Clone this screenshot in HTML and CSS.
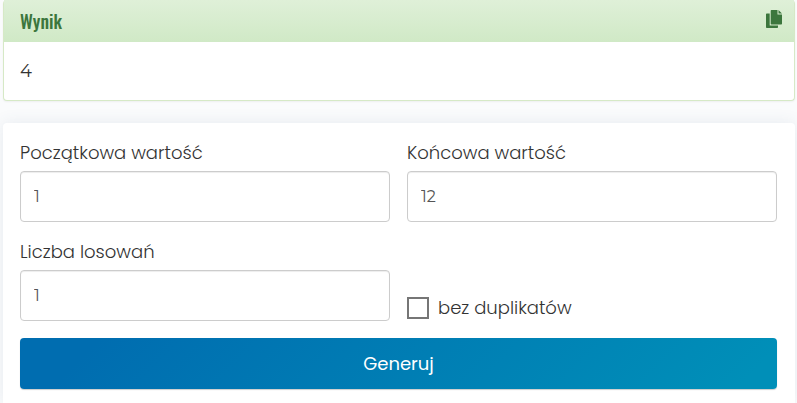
FILE: index.html
```
<!DOCTYPE html>
<html lang="pl">
<head>
    <meta charset="UTF-8">
    <meta name="viewport" content="width=device-width, initial-scale=1">
    <title>Generator liczb losowych</title>
    <link rel="stylesheet" href="styles.css">
</head>
<body>
<main class="generator">
    <section class="result">
        <div class="result__header">
            <h2 class="result__title">Wynik</h2>
            <button type="button" class="result__copy" aria-label="Kopiuj">
                <svg width="16" height="18" viewBox="0 0 16 18" aria-hidden="true">
                    <path fill="currentColor" d="M5.500 0H11.500v4.500H16v9.200a.8.800 0 0 1-.8.800H5.500a.8.800 0 0 1-.8-.8V.8a.8.800 0 0 1 .8-.8zM12.500 0L16 3.500h-3.500zM.8 3.500h2.900V15.500h8.300v1.700a.8.800 0 0 1-.8.800H.8a.8.800 0 0 1-.8-.8V4.300a.8.800 0 0 1 .8-.8z"/>
                </svg>
            </button>
        </div>
        <div class="result__body">4</div>
    </section>

    <form class="form">
        <div class="form__grid">
            <div class="field">
                <label for="valueFrom" class="field__label">Początkowa wartość</label>
                <input type="text" inputmode="numeric" id="valueFrom" class="field__input" value="1">
            </div>
            <div class="field">
                <label for="valueTo" class="field__label">Końcowa wartość</label>
                <input type="text" inputmode="numeric" id="valueTo" class="field__input" value="12">
            </div>
            <div class="field">
                <label for="drawCount" class="field__label">Liczba losowań</label>
                <input type="text" inputmode="numeric" id="drawCount" class="field__input" value="1">
            </div>
            <div class="option">
                <input type="checkbox" id="unique" class="option__box">
                <label for="unique" class="option__label">bez duplikatów</label>
            </div>
        </div>
        <button type="button" class="form__submit">Generuj</button>
    </form>
</main>
</body>
</html>
```
FILE: styles.css
```
* {
    box-sizing: border-box;
}

body {
    margin: 0;
    background-color: #fafbfc;
    color: #333;
    font-family: Poppins, Inter, sans-serif;
    font-size: 18px;
    font-weight: 300;
    line-height: 26px;
}

.generator {
    display: flex;
    flex-direction: column;
    gap: 22px;
    padding: 0 2px 0 3px;
}

.result {
    background-color: #fff;
    border: 1px solid #d6e9c6;
    border-top: 0;
    border-radius: 4px;
    box-shadow: 0 1px 2px rgba(0, 0, 0, .05);
}

.result__header {
    display: flex;
    justify-content: space-between;
    align-items: center;
    height: 42px;
    padding: 0 12px 0 16px;
    background: linear-gradient(#dff0d8, #d0e9c6);
    color: #3c763d;
}

.result__title {
    margin: 0;
    font-family: Oswald, "Liberation Sans Narrow", "Roboto Condensed", "Liberation Sans", sans-serif;
    font-size: 18px;
    font-weight: 500;
}

.result__copy {
    display: flex;
    padding: 0 0 4px;
    border: 0;
    background: none;
    color: inherit;
    cursor: pointer;
}

.result__body {
    padding: 16px;
    font-family: Montserrat, Inter, sans-serif;
    font-weight: 400;
}

.form {
    padding: 17px 18px 14px 17px;
    background-color: #fff;
    border-radius: 4px 4px 0 0;
    box-shadow: 0 0 16px rgba(60, 90, 130, .1);
}

.form__grid {
    display: grid;
    grid-template-columns: 1fr 1fr;
    gap: 17px;
}

.field {
    display: flex;
    flex-direction: column;
    gap: 5px;
}

.field__input {
    width: 100%;
    height: 51px;
    padding: 0 13px;
    border: 1px solid #ccc;
    border-radius: 4px;
    background-color: #fff;
    box-shadow: inset 0 1px 1px rgba(0, 0, 0, .075);
    color: #555;
    font-family: Montserrat, Inter, sans-serif;
    font-size: 16px;
}

.option {
    display: flex;
    align-items: center;
    align-self: end;
    gap: 9px;
}

.option__box {
    appearance: none;
    width: 22px;
    height: 22px;
    margin: 0;
    border: 2px solid #767676;
    background-color: #fff;
}

.option__box:checked {
    background-color: #0070b0;
    box-shadow: inset 0 0 0 3px #fff;
}

.form__submit {
    display: block;
    width: 100%;
    height: 51px;
    margin-top: 17px;
    border: 0;
    border-radius: 4px;
    background: linear-gradient(135deg, #006db0 10%, #008fb8 95%);
    box-shadow: 0 1px 1px rgba(0, 0, 0, .2);
    color: #fff;
    font-family: inherit;
    font-size: 18px;
    font-weight: 400;
    cursor: pointer;
}
```
